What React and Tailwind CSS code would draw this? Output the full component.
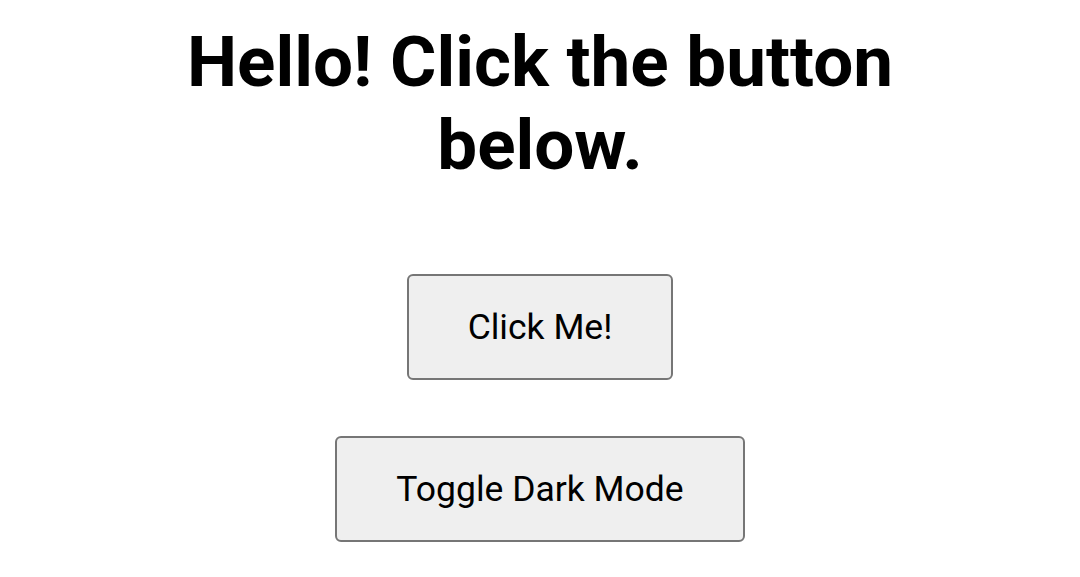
export default function App() {
  return (
    <div className="flex flex-col items-center bg-white min-h-[577px] pt-[21px] font-['Roboto',sans-serif]">
      <h1 className="text-[71px] font-bold leading-[82.5px] text-center text-black m-0 max-w-[740px] font-['Roboto',sans-serif]">
        Hello! Click the button below.
      </h1>
      <button className="mt-[88px] px-[59px] py-[30px] text-[35.5px] leading-[42px] bg-[#efefef] border-2 border-[#767676] rounded-[6px] text-black font-['Roboto',sans-serif]">
        Click Me!
      </button>
      <button className="mt-[56px] px-[59px] py-[30px] text-[35.5px] leading-[42px] bg-[#efefef] border-2 border-[#767676] rounded-[6px] text-black font-['Roboto',sans-serif]">
        Toggle Dark Mode
      </button>
    </div>
  );
}
